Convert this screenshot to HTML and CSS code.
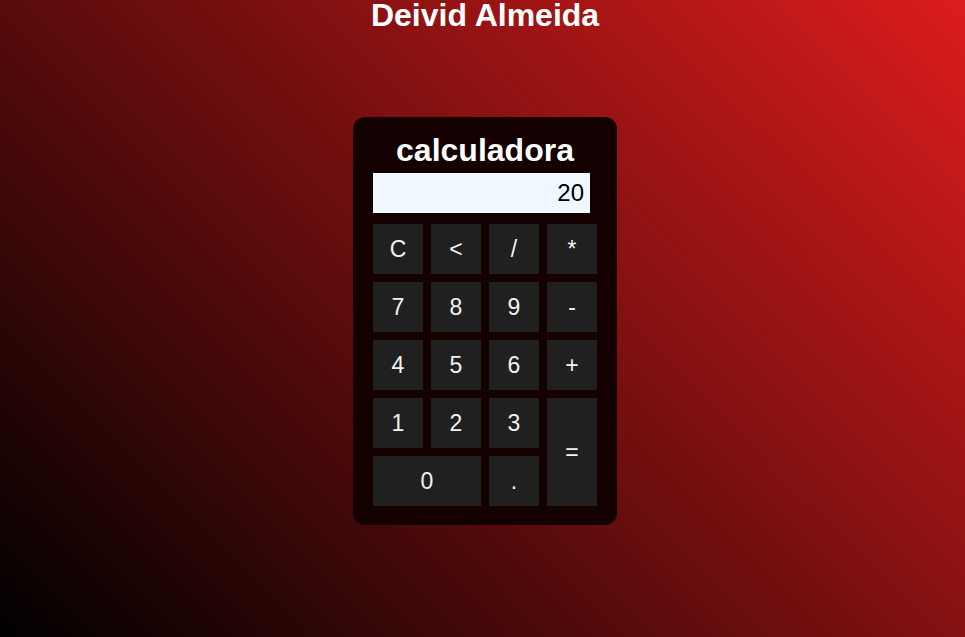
FILE: index.html
```html
<!DOCTYPE html>
<html lang="pt-BR">
<head>
<meta charset="utf-8">
<title>Calculadora</title>
<link rel="stylesheet" href="styles.css">
</head>
<body>
<h1 class="author">Deivid Almeida</h1>
<div class="calc">
  <h2 class="calc-title">calculadora</h2>
  <div class="display">20</div>
  <div class="keys">
    <div class="key">C</div>
    <div class="key">&lt;</div>
    <div class="key">/</div>
    <div class="key">*</div>
    <div class="key">7</div>
    <div class="key">8</div>
    <div class="key">9</div>
    <div class="key">-</div>
    <div class="key">4</div>
    <div class="key">5</div>
    <div class="key">6</div>
    <div class="key">+</div>
    <div class="key">1</div>
    <div class="key">2</div>
    <div class="key">3</div>
    <div class="key key-eq">=</div>
    <div class="key key-zero">0</div>
    <div class="key">.</div>
  </div>
</div>
</body>
</html>
```
FILE: styles.css
```css
html, body {
  margin: 0;
  height: 100%;
}
body {
  background: linear-gradient(45deg, #000000, #dc1c1c);
  font-family: "Liberation Sans", Arial, sans-serif;
  color: #ffffff;
  display: flex;
  flex-direction: column;
  align-items: center;
  padding-left: 5px;
  box-sizing: border-box;
}
.author {
  margin: 0;
  font-size: 32px;
  line-height: 30px;
  font-weight: bold;
}
.calc {
  margin-top: 87px;
  width: 264px;
  box-sizing: border-box;
  padding: 15px 20px 19px;
  background: #150000;
  border-radius: 12px;
  display: flex;
  flex-direction: column;
}
.calc-title {
  margin: 0 0 5px;
  font-size: 32px;
  line-height: 36px;
  text-align: center;
  font-weight: bold;
}
.display {
  width: 217px;
  height: 40px;
  box-sizing: border-box;
  background: #f0f8ff;
  color: #000;
  font-size: 24px;
  line-height: 40px;
  text-align: right;
  padding-right: 6px;
  margin-bottom: 11px;
}
.keys {
  display: grid;
  grid-template-columns: repeat(4, 50px);
  grid-auto-rows: 50px;
  gap: 8px;
}
.key {
  background: #202020;
  color: #f2f2f2;
  font-size: 23px;
  display: flex;
  align-items: center;
  justify-content: center;
}
.key-eq {
  grid-column: 4;
  grid-row: 4 / span 2;
}
.key-zero {
  grid-column: 1 / span 2;
}
```
